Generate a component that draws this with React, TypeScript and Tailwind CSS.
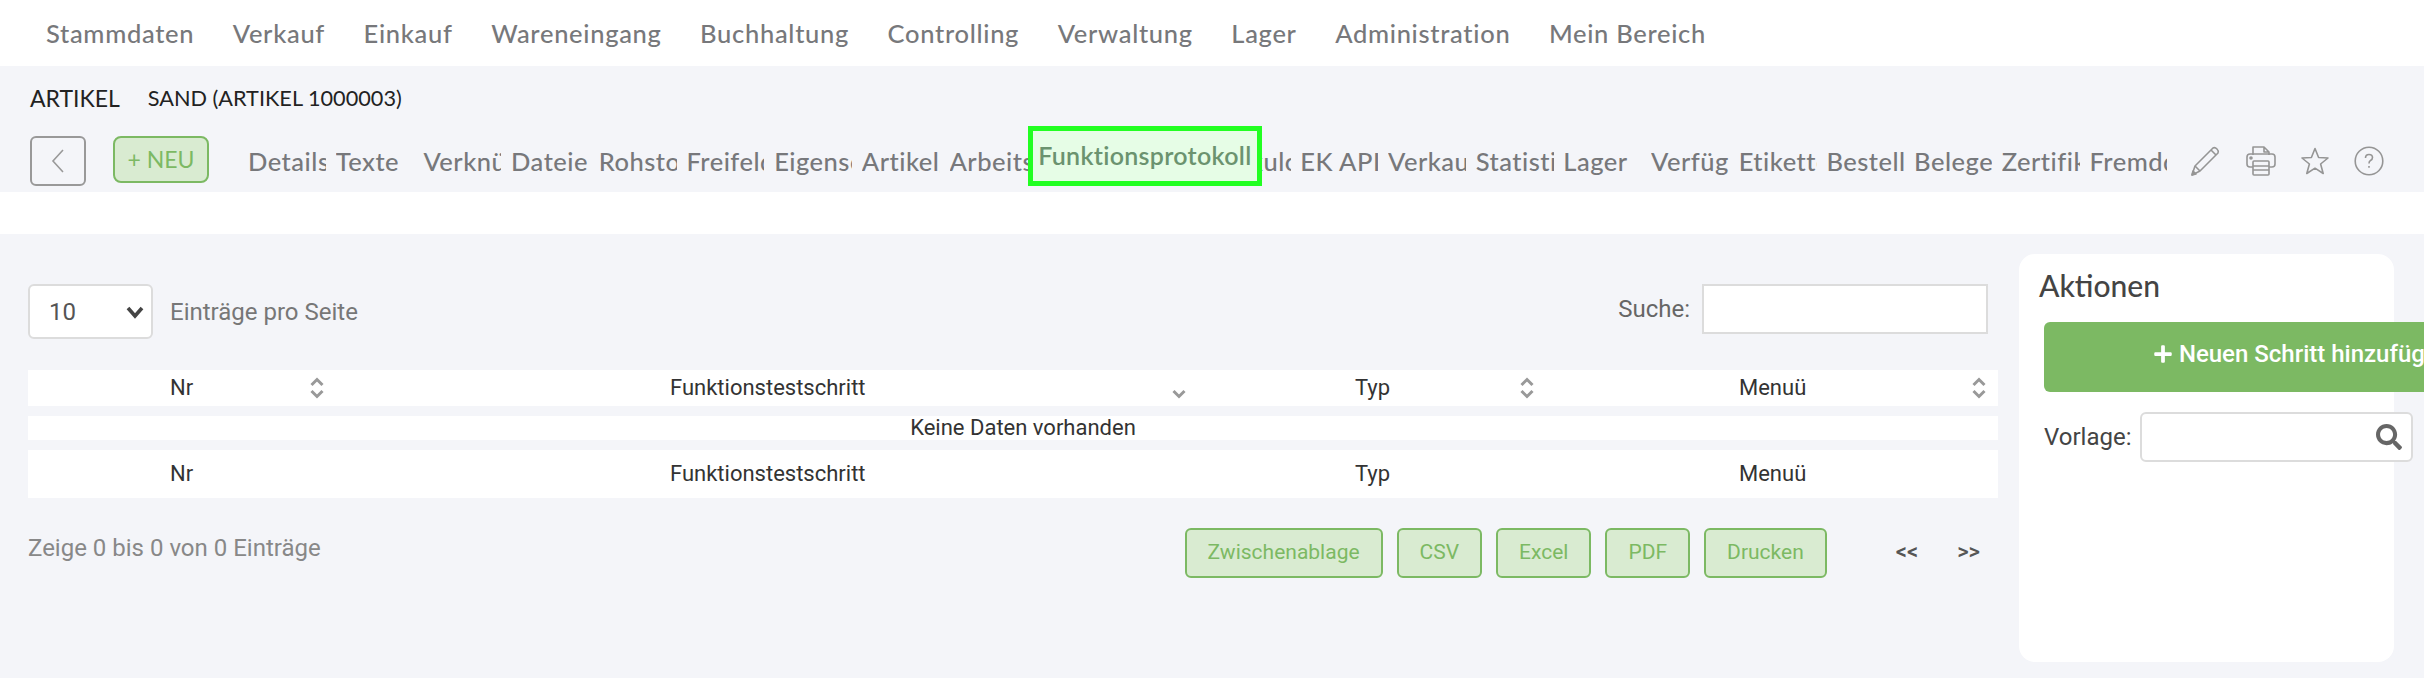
import React from "react";
import { FaPlus, FaSearch } from "react-icons/fa";

const navItems = ["Stammdaten", "Verkauf", "Einkauf", "Wareneingang", "Buchhaltung", "Controlling", "Verwaltung", "Lager", "Administration", "Mein Bereich"];
const tabs = ["Details", "Texte", "Verknüpfungen", "Dateien", "Rohstoffe", "Freifelder", "Eigenschaften", "Artikelgruppen", "Arbeitsschritte", "Funktionsprotokoll", "Kalkulation", "Kalkulc", "EK API", "Verkauf", "Statistik", "Lager", "Verfügbarkeit", "Etiketten", "Bestellungen", "Belege", "Zertifikate", "Fremddaten"];
const exportButtons = ["Zwischenablage", "CSV", "Excel", "PDF", "Drucken"];

const SortIcon = ({ up = true }: { up?: boolean }) => (
  <svg width="18" height="24" viewBox="0 0 18 24" fill="none" stroke="#999" strokeWidth="3">
    {up && <path d="M3.5 9 L9 3.5 L14.5 9" />}
    <path d="M3.5 15 L9 20.5 L14.5 15" />
  </svg>
);

const Cell = ({ label, className, children }: any) => (
  <div className={`flex items-center justify-between ${className}`}>
    <span className="pb-[2px]">{label}</span>
    {children}
  </div>
);

const TableRow = ({ sort, className }: { sort?: boolean; className: string }) => (
  <div className={`grid grid-cols-[302px_860px_348px_460px] bg-white text-[#333] ${className}`}>
    <Cell label="Nr" className="pl-[142px] pr-[4px]">{sort && <SortIcon />}</Cell>
    <Cell label="Funktionstestschritt" className="pl-[340px] pr-[2px]">{sort && <SortIcon up={false} />}</Cell>
    <Cell label="Typ" className="pl-[165px] pr-[2px]">{sort && <SortIcon />}</Cell>
    <Cell label="Menuü" className="pl-[201px] pr-[10px]">{sort && <SortIcon />}</Cell>
  </div>
);

const ToolIcons = () => (
  <div className="flex items-center gap-[25px] ml-[22px] text-[#959595]">
    <svg width="32" height="32" viewBox="0 0 32 32" fill="none" stroke="currentColor" strokeWidth="1.6" strokeLinejoin="round">
      <path d="M3 30 L6 21 L24 3 Q26 2 28 4 Q30 6 29 8 L11 26 Z" />
      <path d="M6 21 L11 26 M22 5 L27 10" />
      <path d="M3 30 L7 29 L4 26 Z" fill="currentColor" />
    </svg>
    <svg width="30" height="30" viewBox="0 0 30 30" fill="none" stroke="currentColor" strokeWidth="1.6" strokeLinejoin="round">
      <path d="M7 9 V1 H18 L23 6 V9 M18 1 V6 H23" />
      <path d="M7 21 H4 Q1 21 1 18 V11 Q1 8 4 8 H26 Q29 8 29 11 V18 Q29 21 26 21 H23" />
      <rect x="7" y="15" width="16" height="14" rx="1" />
      <path d="M7 20 H23 M7 24 H23" />
      <circle cx="5" cy="12" r="1" fill="currentColor" />
    </svg>
    <svg width="28" height="28" viewBox="0 0 28 28" fill="none" stroke="currentColor" strokeWidth="1.6" strokeLinejoin="round">
      <path d="M14 1.5 L17.6 10.5 L27 11 L19.6 17 L22.2 26.5 L14 21.2 L5.8 26.5 L8.4 17 L1 11 L10.4 10.5 Z" />
    </svg>
    <svg width="30" height="30" viewBox="0 0 30 30" fill="none" stroke="currentColor" strokeWidth="1.6">
      <circle cx="15" cy="15" r="13.8" />
      <path d="M11.5 12 Q11.5 8.5 15 8.5 Q18.5 8.5 18.5 11.5 Q18.5 13.5 16.5 14.5 Q15 15.3 15 17.5" />
      <path d="M15 20 V21.8" />
    </svg>
  </div>
);

export default function App() {
  return (
    <div className="w-[2424px] h-[678px] overflow-hidden bg-[#f4f5f9] font-['Lato',sans-serif]">
      <nav className="h-[66px] bg-white flex items-center pl-[46px] gap-[38.5px] text-[25.5px] tracking-[0.7px] font-medium text-[#77787b]">
        {navItems.map((item) => (
          <span key={item}>{item}</span>
        ))}
      </nav>

      <div className="h-[126px] pl-[30px]">
        <div className="flex items-center h-[64px] gap-[28px] text-[#222]">
          <span className="text-[23px]">ARTIKEL</span>
          <span className="text-[21.7px]">SAND (ARTIKEL 1000003)</span>
        </div>
        <div className="flex items-start h-[50px] mt-[6px]">
          <button className="w-[56px] h-[50px] flex items-center justify-center rounded-[6px] border-2 border-[#999] text-[#999]">
            <svg width="20" height="28" viewBox="0 0 20 28" fill="none" stroke="currentColor" strokeWidth="1.6">
              <path d="M15 3 L5 14 L15 25" />
            </svg>
          </button>
          <button className="ml-[27px] w-[96px] h-[47px] rounded-[8px] border-2 border-[#7cb963] bg-[#d9ebd1] text-[#7cb963] text-[23px]">+ NEU</button>
          <div className="flex ml-[39px] mt-[6px] gap-[9.7px] text-[25.5px] tracking-[0.5px] font-medium text-[#77787b]">
            {tabs.map((tab) =>
              tab === "Funktionsprotokoll" ? (
                <div key={tab} className="relative w-[78px] h-[36px]">
                  <div className="absolute left-[-9px] top-[-16px] w-[234px] h-[60px] z-10 flex items-center pl-[5px] border-[5px] border-[#22ff22] bg-[#e6fde6] text-[25px] tracking-[0.3px] text-[#6b936f] font-semibold whitespace-nowrap">
                    {tab}
                  </div>
                </div>
              ) : (
                <div key={tab} className="w-[78px] h-[36px] overflow-hidden whitespace-nowrap">{tab}</div>
              )
            )}
          </div>
          <div className="mt-[9px]">
            <ToolIcons />
          </div>
        </div>
      </div>

      <div className="h-[42px] bg-white" />

      <div className="flex">
        <div className="w-[1970px] ml-[28px] pt-[50px] font-['Roboto',sans-serif]">
          <div className="flex justify-between h-[55px] pr-[10px]">
            <div className="flex items-center gap-[17px]">
              <div className="w-[125px] h-[55px] flex items-center justify-between pl-[19px] pr-[6px] bg-white rounded-[6px] border-2 border-[#dcdcdc] text-[24px] text-[#555]">
                <span>10</span>
                <svg width="20" height="14" viewBox="0 0 20 14" fill="none" stroke="#444" strokeWidth="3.6">
                  <path d="M3 3 L10 11 L17 3" />
                </svg>
              </div>
              <span className="text-[24px] text-[#777]">Einträge pro Seite</span>
            </div>
            <div className="flex items-start gap-[12px]">
              <span className="text-[24px] leading-[50px] text-[#666]">Suche:</span>
              <div className="w-[286px] h-[50px] bg-white border-2 border-[#dcdcdc]" />
            </div>
          </div>

          <div className="mt-[31px] flex flex-col gap-[10px] text-[22px]">
            <TableRow sort className="h-[36px]" />
            <div className="h-[24px] bg-white text-[#333] leading-[24px] text-center pl-[20px]">Keine Daten vorhanden</div>
            <TableRow className="h-[48px]" />
          </div>

          <div className="flex items-start mt-[30px]">
            <span className="text-[24px] text-[#888] mt-[2px]">Zeige 0 bis 0 von 0 Einträge</span>
            <div className="flex gap-[14px] ml-auto text-[21px]">
              {exportButtons.map((label) => (
                <button key={label} className="h-[50px] px-[21px] rounded-[6px] border-2 border-[#7cb963] bg-[#d9ebd1] text-[#7cb963]">{label}</button>
              ))}
            </div>
            <div className="flex gap-[39px] ml-[69px] mr-[18px] h-[46px] items-center text-[22px] font-medium text-[#555]">
              <span>&lt;&lt;</span>
              <span>&gt;&gt;</span>
            </div>
          </div>
        </div>

        <aside className="ml-[21px] mt-[20px] w-[375px] h-[408px] bg-white rounded-[16px] pl-[20px] pt-[11px] font-['Roboto',sans-serif]">
          <h2 className="text-[30px] leading-[40px] font-medium text-[#444] font-['Lato',sans-serif]">Aktionen</h2>
          <button className="mt-[17px] ml-[5px] w-[516px] h-[70px] pb-[6px] rounded-[6px] bg-[#7cb963] text-white text-[24px] font-medium flex items-center justify-center gap-[6px]">
            <FaPlus className="w-[20px] h-[20px]" />
            Neuen Schritt hinzufügen
          </button>
          <div className="flex items-center gap-[9px] ml-[5px] mt-[20px]">
            <span className="text-[24px] text-[#444]">Vorlage:</span>
            <div className="w-[273px] h-[50px] shrink-0 flex items-center justify-end pr-[9px] bg-white rounded-[6px] border-2 border-[#dcdcdc] text-[#666]">
              <FaSearch className="w-[26px] h-[26px]" />
            </div>
          </div>
        </aside>
      </div>
    </div>
  );
}
